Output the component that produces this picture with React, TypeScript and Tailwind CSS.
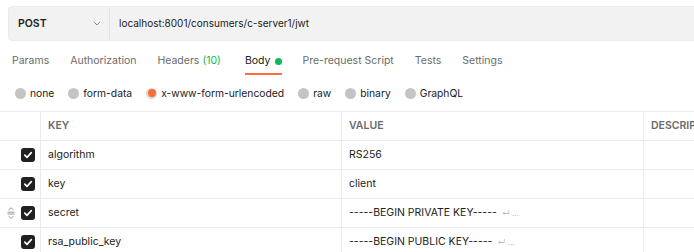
import React from "react";

const font = { fontFamily: "Inter, 'Noto Sans', sans-serif" };

function Check() {
  return (
    <div className="w-[14px] h-[14px] rounded-[3px] bg-[#212121] flex items-center justify-center">
      <svg width="10" height="10" viewBox="0 0 10 10" fill="none">
        <path d="M1.8 5.2 L4 7.3 L8.3 2.7" stroke="#fff" strokeWidth="1.7" strokeLinecap="round" strokeLinejoin="round" />
      </svg>
    </div>
  );
}

function Drag() {
  return (
    <svg width="10" height="12" viewBox="0 0 10 12" fill="none" stroke="#9a9a9a" strokeWidth="1">
      <path d="M2.5 3 L5 0.8 L7.5 3" />
      <path d="M1.5 5.2 H8.5" />
      <path d="M1.5 7 H8.5" />
      <path d="M2.5 9.2 L5 11.4 L7.5 9.2" />
    </svg>
  );
}

function Radio({ label, selected }: { label: string; selected?: boolean }) {
  return (
    <div className="flex items-center gap-[4px]">
      {selected ? (
        <div className="w-[11px] h-[11px] rounded-full bg-[#d9d9d9] flex items-center justify-center">
          <div className="w-[8px] h-[8px] rounded-full bg-[#ff6c37]" />
        </div>
      ) : (
        <div className="w-[11px] h-[11px] rounded-full bg-[#c4c4c4]" />
      )}
      <span className="text-[10.3px] leading-[16px] text-[#212121]">{label}</span>
    </div>
  );
}

const rows: { k: string; v: string; more?: boolean; drag?: boolean }[] = [
  { k: "algorithm", v: "RS256" },
  { k: "key", v: "client" },
  { k: "secret", v: "-----BEGIN PRIVATE KEY-----", more: true, drag: true },
  { k: "rsa_public_key", v: "-----BEGIN PUBLIC KEY-----", more: true },
];

export default function App() {
  return (
    <div className="w-[694px] h-[252px] overflow-hidden bg-white" style={font}>
      <div className="pt-[6px] pl-[8px]">
        <div className="w-[700px] h-[35px] flex items-stretch bg-[#f2f2f2] border border-[#ebebeb] rounded-[4px]">
          <div className="w-[101px] flex items-center justify-between pl-[9px] pr-[8px] border-r border-[#e3e3e3]">
            <span className="text-[10.5px] font-semibold text-[#212121]">POST</span>
            <svg width="8" height="5" viewBox="0 0 8 5" fill="none" stroke="#8a8a8a" strokeWidth="1">
              <path d="M1 1 L4 4 L7 1" />
            </svg>
          </div>
          <div className="flex items-center pl-[9px] text-[10px] text-[#212121]">localhost:8001/consumers/c-server1/jwt</div>
        </div>
      </div>

      <div className="flex pl-[12px] gap-[21px] h-[34px] text-[10.5px]">
        {["Params", "Authorization"].map((t) => (
          <div key={t} className="pt-[12px] leading-[16px] text-[#6b6b6b]">{t}</div>
        ))}
        <div className="pt-[12px] leading-[16px] text-[#6b6b6b]">
          Headers <span className="text-[#0cbb52]">(10)</span>
        </div>
        <div className="flex flex-col ml-[3px]">
          <div className="pt-[12px] leading-[16px] pb-[4px] text-[#212121] flex items-center gap-[4px]">
            Body <span className="w-[7px] h-[7px] rounded-full bg-[#0cbb52] inline-block" />
          </div>
          <div className="h-[2px] bg-[#ff6c37]" />
        </div>
        {["Pre-request Script", "Tests", "Settings"].map((t) => (
          <div key={t} className="pt-[12px] leading-[16px] text-[#6b6b6b]">{t}</div>
        ))}
      </div>

      <div className="h-[36px] flex items-center pl-[15px] gap-[14px]">
        <Radio label="none" />
        <Radio label="form-data" />
        <Radio label="x-www-form-urlencoded" selected />
        <Radio label="raw" />
        <Radio label="binary" />
        <Radio label="GraphQL" />
      </div>

      <div className="border-t border-[#ebebeb] w-[760px]">
        <div className="flex h-[29px] border-b border-[#ebebeb] text-[10.5px] font-semibold text-[#6b6b6b]">
          <div className="w-[41px] border-r border-[#ebebeb]" />
          <div className="w-[301px] border-r border-[#ebebeb] flex items-center pl-[7px]">KEY</div>
          <div className="w-[302px] border-r border-[#ebebeb] flex items-center pl-[7px]">VALUE</div>
          <div className="flex-1 flex items-center pl-[7px]">DESCRIPTION</div>
        </div>
        {rows.map((r) => (
          <div key={r.k} className="flex h-[29px] border-b border-[#ebebeb] text-[10.5px] text-[#212121]">
            <div className="w-[41px] border-r border-[#ebebeb] flex items-center justify-between pl-[6px] pr-[5px]">
              <div className="w-[10px] flex items-center">{r.drag ? <Drag /> : null}</div>
              <Check />
            </div>
            <div className="w-[301px] border-r border-[#ebebeb] flex items-center pl-[7px]">{r.k}</div>
            <div className="w-[302px] border-r border-[#ebebeb] flex items-center pl-[7px]">
              {r.v}
              {r.more ? <span className="ml-[5px] text-[8px] text-[#b3b3b3]">↵ ...</span> : null}
            </div>
            <div className="flex-1" />
          </div>
        ))}
      </div>
    </div>
  );
}
